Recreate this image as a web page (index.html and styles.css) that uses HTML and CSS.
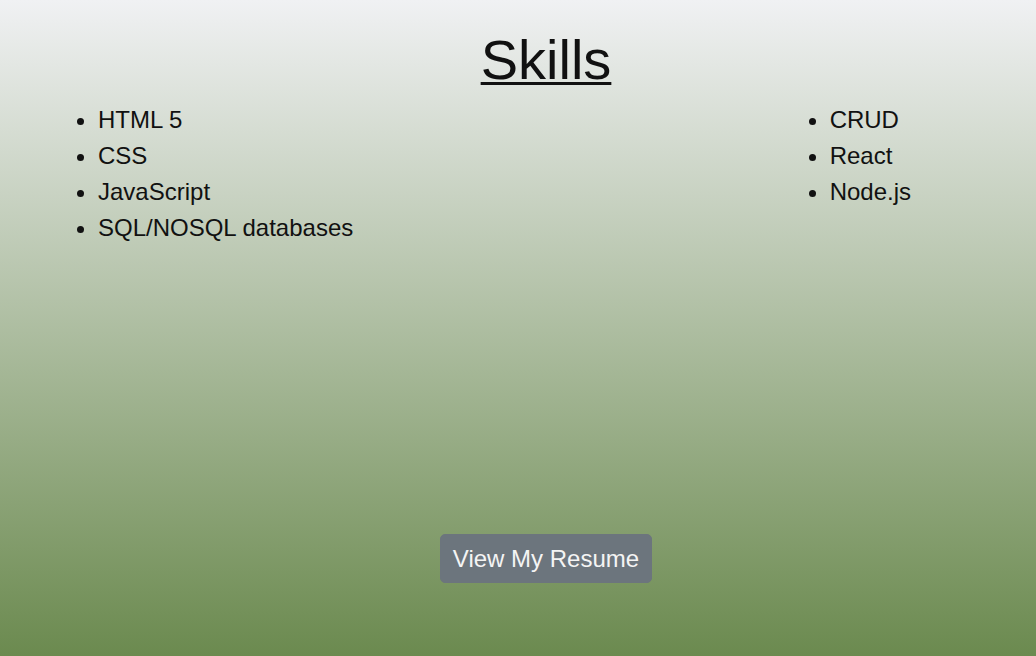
FILE: index.html
```html
<!DOCTYPE html>
<html>
<head>
<meta charset="utf-8">
<link rel="stylesheet" href="styles.css">
</head>
<body>
<main class="page">
  <h1 class="title">Skills</h1>
  <div class="lists">
    <ul class="skill-list left">
      <li>HTML 5</li>
      <li>CSS</li>
      <li>JavaScript</li>
      <li>SQL/NOSQL databases</li>
    </ul>
    <ul class="skill-list right">
      <li>CRUD</li>
      <li>React</li>
      <li>Node.js</li>
    </ul>
  </div>
  <div class="actions">
    <button class="btn">View My Resume</button>
  </div>
</main>
</body>
</html>
```
FILE: styles.css
```css
html, body {
  margin: 0;
  padding: 0;
  height: 100%;
}
body {
  font-family: "Liberation Sans", Arial, sans-serif;
  color: #111;
  background: linear-gradient(to bottom, #f0f1f3 0%, #6b8a4f 100%);
  min-height: 100vh;
}
.page {
  padding-left: 56px;
  padding-top: 26px;
  box-sizing: border-box;
  min-height: 100vh;
}
.title {
  margin: 0;
  font-size: 56px;
  font-weight: normal;
  line-height: 67px;
  text-align: center;
  text-decoration: underline;
  text-decoration-thickness: 3px;
  text-underline-offset: 3px;
}
.lists {
  display: flex;
  justify-content: space-between;
  margin-top: 9px;
  padding-right: 125px;
}
.skill-list {
  margin: 0;
  padding-left: 40px;
  font-size: 24px;
  line-height: 36px;
}
.skill-list.left {
  margin-left: 2px;
}
.actions {
  display: flex;
  justify-content: center;
  margin-top: 288px;
}
.btn {
  font-family: "Liberation Sans", Arial, sans-serif;
  font-size: 24px;
  line-height: 36px;
  padding: 6px 12px;
  border: 0.5px solid #6c757d;
  background: #6c757d;
  color: #f4f4f4;
  border-radius: 5px;
  white-space: nowrap;
  height: 49px;
  box-sizing: border-box;
}
```
